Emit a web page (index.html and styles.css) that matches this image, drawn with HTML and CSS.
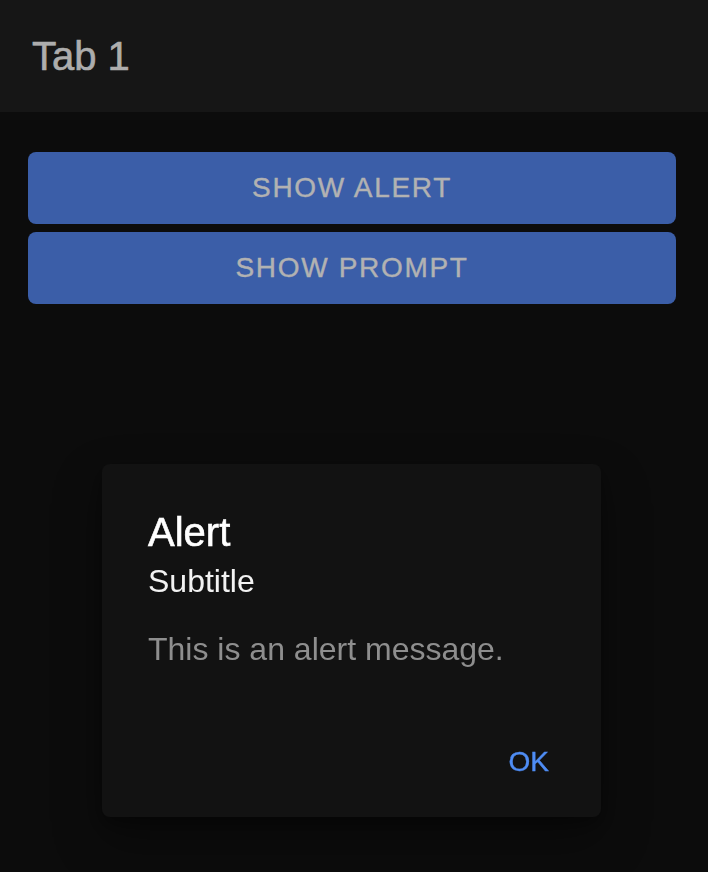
FILE: index.html
```html
<!DOCTYPE html>
<html lang="en">
<head>
<meta charset="utf-8">
<title>Tab 1</title>
<link rel="stylesheet" href="styles.css">
</head>
<body>
  <header class="toolbar">
    <h1 class="toolbar-title">Tab 1</h1>
  </header>
  <main class="content">
    <button class="btn">SHOW ALERT</button>
    <button class="btn">SHOW PROMPT</button>
  </main>
  <div class="overlay">
    <div class="alert" role="alertdialog">
      <div class="alert-head">
        <h2 class="alert-title">Alert</h2>
        <h3 class="alert-subtitle">Subtitle</h3>
      </div>
      <div class="alert-message">This is an alert message.</div>
      <div class="alert-buttons">
        <button class="alert-btn">OK</button>
      </div>
    </div>
  </div>
</body>
</html>
```

FILE: styles.css
```css
* { box-sizing: border-box; }

html, body {
  margin: 0;
  padding: 0;
  height: 100%;
}

body {
  background: #0c0c0c;
  font-family: "Liberation Sans", Arial, Helvetica, sans-serif;
  overflow: hidden;
}

.toolbar {
  height: 112px;
  background: #161616;
  display: flex;
  align-items: center;
  padding: 0 32px;
}

.toolbar-title {
  margin: 0;
  font-size: 40px;
  font-weight: 500;
  color: #adadad;
  line-height: 48px;
  -webkit-text-stroke: 0.6px #adadad;
}

.content {
  display: flex;
  flex-direction: column;
  gap: 8px;
  padding: 40px 32px 0 28px;
}

.btn {
  height: 72px;
  border: none;
  border-radius: 8px;
  background: #3b5ea8;
  color: #b2b2b2;
  font-family: inherit;
  font-size: 28px;
  font-weight: 500;
  letter-spacing: 0.06em;
  padding: 0;
  -webkit-text-stroke: 0.4px #b2b2b2;
}

.overlay {
  position: fixed;
  inset: 0;
}

.alert {
  position: absolute;
  top: 464px;
  left: 102px;
  width: 499px;
  background: #121212;
  border-radius: 8px;
  box-shadow: 0 22px 48px rgba(0, 0, 0, 0.35), 0 6px 16px rgba(0, 0, 0, 0.3);
}

.alert-head {
  padding: 44px 46px 30px;
}

.alert-title {
  margin: 0;
  font-size: 40px;
  font-weight: 500;
  line-height: 48px;
  color: #ffffff;
  -webkit-text-stroke: 0.6px #ffffff;
}

.alert-subtitle {
  margin: 6px 0 0;
  font-size: 32px;
  font-weight: 400;
  line-height: 38px;
  color: #f2f2f2;
}

.alert-message {
  padding: 0 46px 45px;
  font-size: 32px;
  line-height: 38px;
  color: #8e8e8e;
}

.alert-buttons {
  display: flex;
  justify-content: flex-end;
  padding: 16px;
}

.alert-btn {
  height: 72px;
  margin-right: 16px;
  padding: 0 20px 6px;
  border: none;
  background: transparent;
  color: #4f8df5;
  font-family: inherit;
  font-size: 28px;
  font-weight: 500;
  -webkit-text-stroke: 0.4px #4f8df5;
}
```
